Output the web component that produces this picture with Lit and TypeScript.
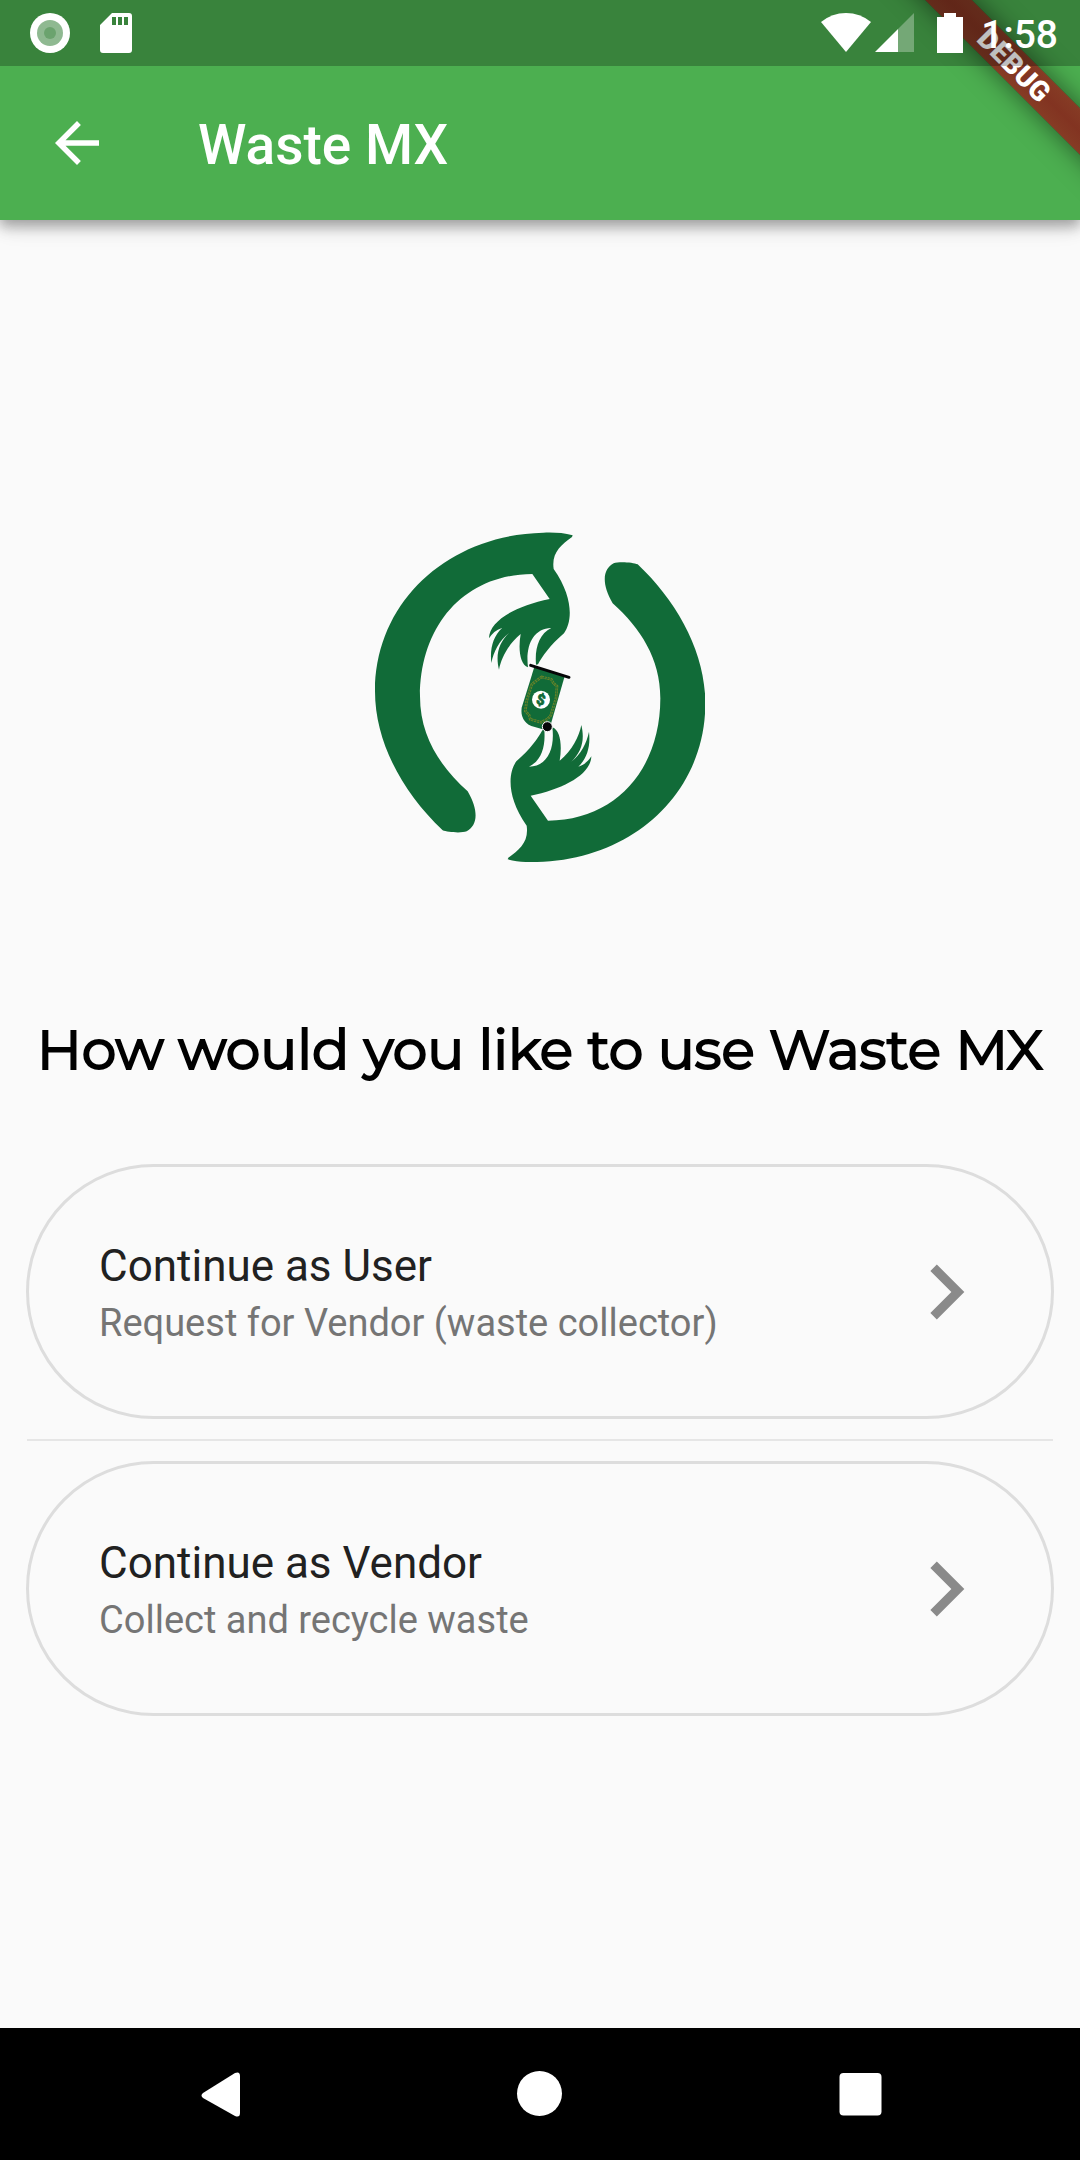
import { LitElement, html, css, svg } from "lit";
import { customElement, property } from "lit/decorators.js";

const HAND_RING =
  "M638 77C610 69 580 68 550 69C265 75 45 275 45 545C45 700 130 850 248 962C262 968 305 971 320 965C352 948 358 905 323 845C240 770 180 680 180 560C180 350 310 195 517 193L569 268C470 288 388 332 387 386C396 371 408 361 426 355C400 380 389 415 394 460C401 425 418 393 447 370C416 400 406 435 417 480C423 447 445 403 482 373C474 420 480 464 504 473C496 410 518 356 574 355C537 373 524 415 528 465L534 464C546 442 570 406 612 371C638 335 640 262 581 178C574 130 602 107 636 82Z";

const BILL_FRAME =
  "M545 502L574 509L580 520L591 530L588 566L572 618L563 628L543 638L511 629L507 616L496 604L500 574L515 525L528 514Z";

@customElement("status-bar")
export class StatusBar extends LitElement {
  static styles = css`
    :host {
      display: flex;
      align-items: center;
      height: 66px;
      box-sizing: border-box;
      padding: 0 22px 0 28px;
      background: rgba(0, 0, 0, 0.25);
      color: #fff;
      font: 500 39px/66px Roboto, sans-serif;
    }
    svg {
      display: block;
      height: 44px;
    }
    .sync {
      width: 44px;
      margin-right: 26px;
    }
    .card {
      width: 36px;
    }
    .space {
      flex: 1;
    }
    .wifi {
      width: 52px;
    }
    .signal {
      width: 40px;
      margin-left: 3px;
    }
    .battery {
      width: 28px;
      margin: 0 17px 0 21px;
    }
    time {
      padding-top: 4px;
    }
  `;

  render() {
    return html`
      <svg class="sync" viewBox="0 0 44 44" aria-hidden="true">
        <circle cx="22" cy="22" r="20" fill="#fff" />
        <circle cx="22" cy="22" r="13" fill="#8fb991" />
        <circle cx="22" cy="22" r="6" fill="#6ba36e" />
      </svg>
      <svg class="card" viewBox="0 0 36 44" aria-hidden="true">
        <path fill="#fff" fill-rule="evenodd" d="M14 2h17a3 3 0 0 1 3 3v34a3 3 0 0 1-3 3H5a3 3 0 0 1-3-3V14zM14 6v8h4V6zM20 6v8h4V6zM26 6v8h4V6z" />
      </svg>
      <span class="space"></span>
      <svg class="wifi" viewBox="0 0 52 44" aria-hidden="true">
        <path fill="#fff" d="M1 11Q12 2 26 2T51 11L26 41Z" />
      </svg>
      <svg class="signal" viewBox="0 0 40 44" aria-hidden="true">
        <path fill="#fff" opacity=".3" d="M23 18L39 2V41H23Z" />
        <path fill="#fff" d="M0 41L23 18V41Z" />
      </svg>
      <svg class="battery" viewBox="0 0 28 44" aria-hidden="true">
        <path fill="#fff" d="M8 2H20V6H27V42H1V6H8Z" />
      </svg>
      <time>1:58</time>
    `;
  }
}

@customElement("debug-banner")
export class DebugBanner extends LitElement {
  static styles = css`
    :host {
      position: absolute;
      top: 0;
      right: 0;
      width: 220px;
      height: 220px;
      overflow: hidden;
      pointer-events: none;
    }
    .ribbon {
      position: absolute;
      top: 49px;
      right: -154px;
      width: 440px;
      height: 33px;
      transform: rotate(45deg);
      background: linear-gradient(rgba(183, 28, 28, 0.63), rgba(183, 28, 28, 0.63)),
        linear-gradient(rgba(0, 0, 0, 0.35), rgba(0, 0, 0, 0.48), rgba(0, 0, 0, 0.35));
      box-shadow: 0 0 26px rgba(0, 0, 0, 0.5);
      color: #fff;
      text-align: center;
      font: 900 28px/33px Roboto, sans-serif;
    }
  `;

  render() {
    return html`<div class="ribbon">DEBUG</div>`;
  }
}

@customElement("waste-logo")
export class WasteLogo extends LitElement {
  static styles = css`
    :host {
      display: block;
    }
    svg {
      display: block;
      width: 330px;
      height: 330px;
    }
    .sign {
      font: 900 44px Roboto, sans-serif;
    }
  `;

  render() {
    return html`
      <svg viewBox="45 67 990 990" role="img" aria-label="Waste MX logo">
        <path fill="#116b38" d=${HAND_RING} />
        <path fill="#116b38" transform="rotate(180 540.5 563)" d=${HAND_RING} />
        <path fill="#116b38" d="M523 472L614 500L572 645L556 661L514 649Q480 633 485 594Z" />
        ${svg`
          <g fill="none">
            <path stroke="#6f8428" stroke-width="8" stroke-dasharray="7 2" d=${BILL_FRAME} />
            <path stroke="#116b38" stroke-width="2" d=${BILL_FRAME} />
          </g>`}
        <circle cx="543" cy="570" r="27" fill="#fff" />
        <text class="sign" x="543" y="585" text-anchor="middle" fill="#116b38" stroke="#116b38" stroke-width="2" transform="rotate(15 543 570)">$</text>
        <path d="M512 467L627 503" stroke="#060608" stroke-width="9" stroke-linecap="round" />
        <circle cx="562" cy="651" r="15" fill="#060608" stroke="#fff" stroke-width="3" />
      </svg>
    `;
  }
}

@customElement("choice-card")
export class ChoiceCard extends LitElement {
  @property() heading = "";
  @property() detail = "";

  static styles = css`
    :host {
      display: block;
    }
    .choice {
      display: flex;
      align-items: center;
      justify-content: space-between;
      box-sizing: border-box;
      width: 100%;
      min-height: 255px;
      padding: 0 50px 0 70px;
      border: 3px solid #ddd;
      border-radius: 128px;
      background: none;
      text-align: left;
      font-family: Roboto, sans-serif;
      cursor: pointer;
    }
    .text {
      display: flex;
      flex-direction: column;
      gap: 1px;
      padding-top: 6px;
      line-height: 56px;
    }
    .heading {
      font-size: 44px;
      color: #212121;
    }
    .detail {
      font-size: 38px;
      color: #757575;
    }
    svg {
      flex: none;
      width: 110px;
      height: 110px;
      fill: #8a8a8a;
    }
  `;

  render() {
    return html`
      <button class="choice" type="button">
        <span class="text">
          <span class="heading">${this.heading}</span>
          <span class="detail">${this.detail}</span>
        </span>
        <svg viewBox="0 0 24 24" aria-hidden="true">
          <path d="M10 6L8.59 7.41 13.17 12l-4.58 4.59L10 18l6-6z" />
        </svg>
      </button>
    `;
  }
}

@customElement("system-nav")
export class SystemNav extends LitElement {
  static styles = css`
    :host {
      display: block;
      background: #000;
    }
    nav {
      display: grid;
      grid-template-columns: repeat(3, 1fr);
      padding: 0 60px;
    }
    button {
      display: flex;
      align-items: center;
      justify-content: center;
      height: 132px;
      padding: 0;
      border: 0;
      background: none;
    }
    svg {
      width: 48px;
      height: 48px;
      fill: #fff;
    }
  `;

  render() {
    return html`
      <nav aria-label="System">
        <button type="button" aria-label="Back">
          <svg viewBox="0 0 48 48"><path d="M7 23L39 3Q44 1 44 6V43Q44 48 39 46L7 28Q4 25.500 7 23Z" /></svg>
        </button>
        <button type="button" aria-label="Home">
          <svg viewBox="0 0 48 48"><circle cx="23.500" cy="23.500" r="22.500" /></svg>
        </button>
        <button type="button" aria-label="Recent apps">
          <svg viewBox="0 0 48 48"><rect x="3.500" y="3" width="42" height="42.500" rx="4" /></svg>
        </button>
      </nav>
    `;
  }
}

@customElement("app-root")
export class AppRoot extends LitElement {
  static styles = css`
    :host {
      display: flex;
      flex-direction: column;
      position: relative;
      min-height: 100vh;
      background: #fafafa;
      font-family: Roboto, sans-serif;
    }
    header {
      position: relative;
      background: #4caf50;
      box-shadow: 0 5px 11px rgba(0, 0, 0, 0.2), 0 9px 14px rgba(0, 0, 0, 0.14),
        0 2px 26px rgba(0, 0, 0, 0.12);
    }
    status-bar {
      position: relative;
      z-index: 1;
    }
    .toolbar {
      display: flex;
      align-items: center;
      gap: 88px;
      height: 154px;
      padding-left: 44px;
    }
    .back {
      display: flex;
      padding: 0;
      border: 0;
      background: none;
      cursor: pointer;
    }
    .back svg {
      width: 66px;
      height: 66px;
      fill: #fff;
    }
    .title {
      margin: 0;
      padding-top: 4px;
      color: #fff;
      font-size: 55px;
      font-weight: 500;
      line-height: 66px;
    }
    main {
      flex: 1;
      display: flex;
      flex-direction: column;
      justify-content: center;
      padding: 0 26px;
    }
    waste-logo {
      align-self: center;
    }
    .question {
      margin: 154px 0 80px;
      color: #000;
      text-align: center;
      white-space: nowrap;
      font: 400 55px/68px Montserrat, Inter, sans-serif;
      -webkit-text-stroke: 2px #000;
    }
    hr {
      height: 2px;
      margin: 20px 1px;
      border: 0;
      background: #e6e6e6;
    }
  `;

  render() {
    return html`
      <header>
        <status-bar></status-bar>
        <div class="toolbar">
          <button class="back" type="button" aria-label="Back">
            <svg viewBox="0 0 24 24"><path d="M20 11H7.83l5.590-5.590L12 4l-8 8 8 8 1.410-1.410L7.830 13H20v-2z" /></svg>
          </button>
          <h1 class="title">Waste MX</h1>
        </div>
        <debug-banner></debug-banner>
      </header>
      <main>
        <waste-logo></waste-logo>
        <h2 class="question">How would you like to use Waste MX</h2>
        <choice-card heading="Continue as User" detail="Request for Vendor (waste collector)"></choice-card>
        <hr />
        <choice-card heading="Continue as Vendor" detail="Collect and recycle waste"></choice-card>
      </main>
      <system-nav></system-nav>
    `;
  }
}
